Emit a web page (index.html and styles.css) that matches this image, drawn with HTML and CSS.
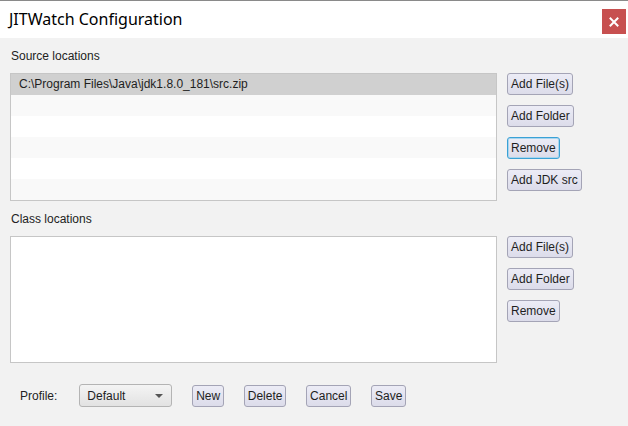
FILE: index.html
```html
<!DOCTYPE html>
<html>
<head>
<meta charset="utf-8">
<link rel="stylesheet" href="styles.css">
</head>
<body>
<div class="window">
  <div class="titlebar">
    <div class="title">JITWatch Configuration</div>
    <div class="close"><svg width="10" height="10" viewBox="0 0 10 10"><path d="M1.5 1.5 L8.5 8.5 M8.5 1.5 L1.5 8.5" stroke="#fff" stroke-width="2" stroke-linecap="square"/></svg></div>
  </div>
  <div class="content">
    <div class="label">Source locations</div>
    <div class="section">
      <div class="list">
        <div class="row selected">C:\Program Files\Java\jdk1.8.0_181\src.zip</div>
        <div class="row odd"></div>
        <div class="row"></div>
        <div class="row odd"></div>
        <div class="row"></div>
        <div class="row odd"></div>
      </div>
      <div class="buttons">
        <button class="btn">Add File(s)</button>
        <button class="btn">Add Folder</button>
        <button class="btn focused">Remove</button>
        <button class="btn">Add JDK src</button>
      </div>
    </div>
    <div class="label">Class locations</div>
    <div class="section">
      <div class="list plain"></div>
      <div class="buttons">
        <button class="btn">Add File(s)</button>
        <button class="btn">Add Folder</button>
        <button class="btn">Remove</button>
      </div>
    </div>
    <div class="footer">
      <span class="profile-label">Profile:</span>
      <div class="combo"><span>Default</span><span class="arrow"></span></div>
      <button class="btn small">New</button>
      <button class="btn small">Delete</button>
      <button class="btn small">Cancel</button>
      <button class="btn small">Save</button>
    </div>
  </div>
</div>
</body>
</html>
```
FILE: styles.css
```css
* { box-sizing: border-box; }
html, body { margin: 0; padding: 0; }
body {
  width: 628px;
  height: 426px;
  background: #f2f2f2;
  font-family: "Liberation Sans", Arial, sans-serif;
  font-size: 12px;
  color: #1e1e1e;
  overflow: hidden;
}
.window { width: 628px; height: 426px; }
.titlebar {
  height: 38px;
  border-top: 1px solid #8a8a8a;
  background: #ffffff;
  display: flex;
  align-items: flex-start;
}
.title {
  font-family: "Noto Sans", "Open Sans", sans-serif;
  font-size: 16px;
  color: #000;
  margin-left: 9px;
  margin-top: 7px;
  line-height: 22px;
}
.close {
  margin-left: auto;
  margin-right: 2px;
  margin-top: 8px;
  width: 24px;
  height: 25px;
  background: #c75050;
  display: flex;
  align-items: center;
  justify-content: center;
}
.content { padding: 0 10px; }
.label {
  line-height: 14px;
  height: 14px;
  margin-left: 1px;
  margin-top: 11px;
  margin-bottom: 10px;
  color: #222;
}
.section {
  display: flex;
  gap: 10px;
  align-items: flex-start;
}
.list {
  width: 487px;
  height: 128px;
  border: 1px solid #c6c6c6;
  background: #ffffff;
}
.list.plain { height: 127px; }
.row {
  height: 21px;
  line-height: 21px;
  padding-left: 8px;
  background: #ffffff;
  color: #1e1e1e;
}
.row.odd { background: #f9f9f9; }
.row.selected { background: #d0d0d0; }
.buttons {
  display: flex;
  flex-direction: column;
  align-items: flex-start;
  gap: 10px;
}
.btn {
  font-family: "Liberation Sans", Arial, sans-serif;
  font-size: 12px;
  line-height: 14px;
  height: 22px;
  padding: 3px 3px;
  margin: 0;
  color: #1e1e1e;
  background: linear-gradient(#ececf6, #dcdcea);
  border: 1px solid #a4a4b6;
  border-radius: 3px;
}
.btn.small { padding: 3px 2.8px; }
.btn.focused {
  border-color: #3aa1d6;
  box-shadow: inset 0 0 0 1px #a9d6ee;
}
.footer {
  display: flex;
  align-items: center;
  gap: 20px;
  margin-top: 21px;
  padding-left: 10px;
  height: 23px;
}
.profile-label { margin-right: 2px; color: #222; }
.combo {
  width: 93px;
  height: 23px;
  border: 1px solid #b4b4b4;
  border-radius: 3px;
  background: linear-gradient(#f4f4f4, #e2e2e2);
  display: flex;
  align-items: center;
  padding-left: 7px;
  padding-right: 8px;
}
.combo .arrow {
  margin-left: auto;
  width: 0;
  height: 0;
  border-left: 4px solid transparent;
  border-right: 4px solid transparent;
  border-top: 4px solid #555;
}
```
